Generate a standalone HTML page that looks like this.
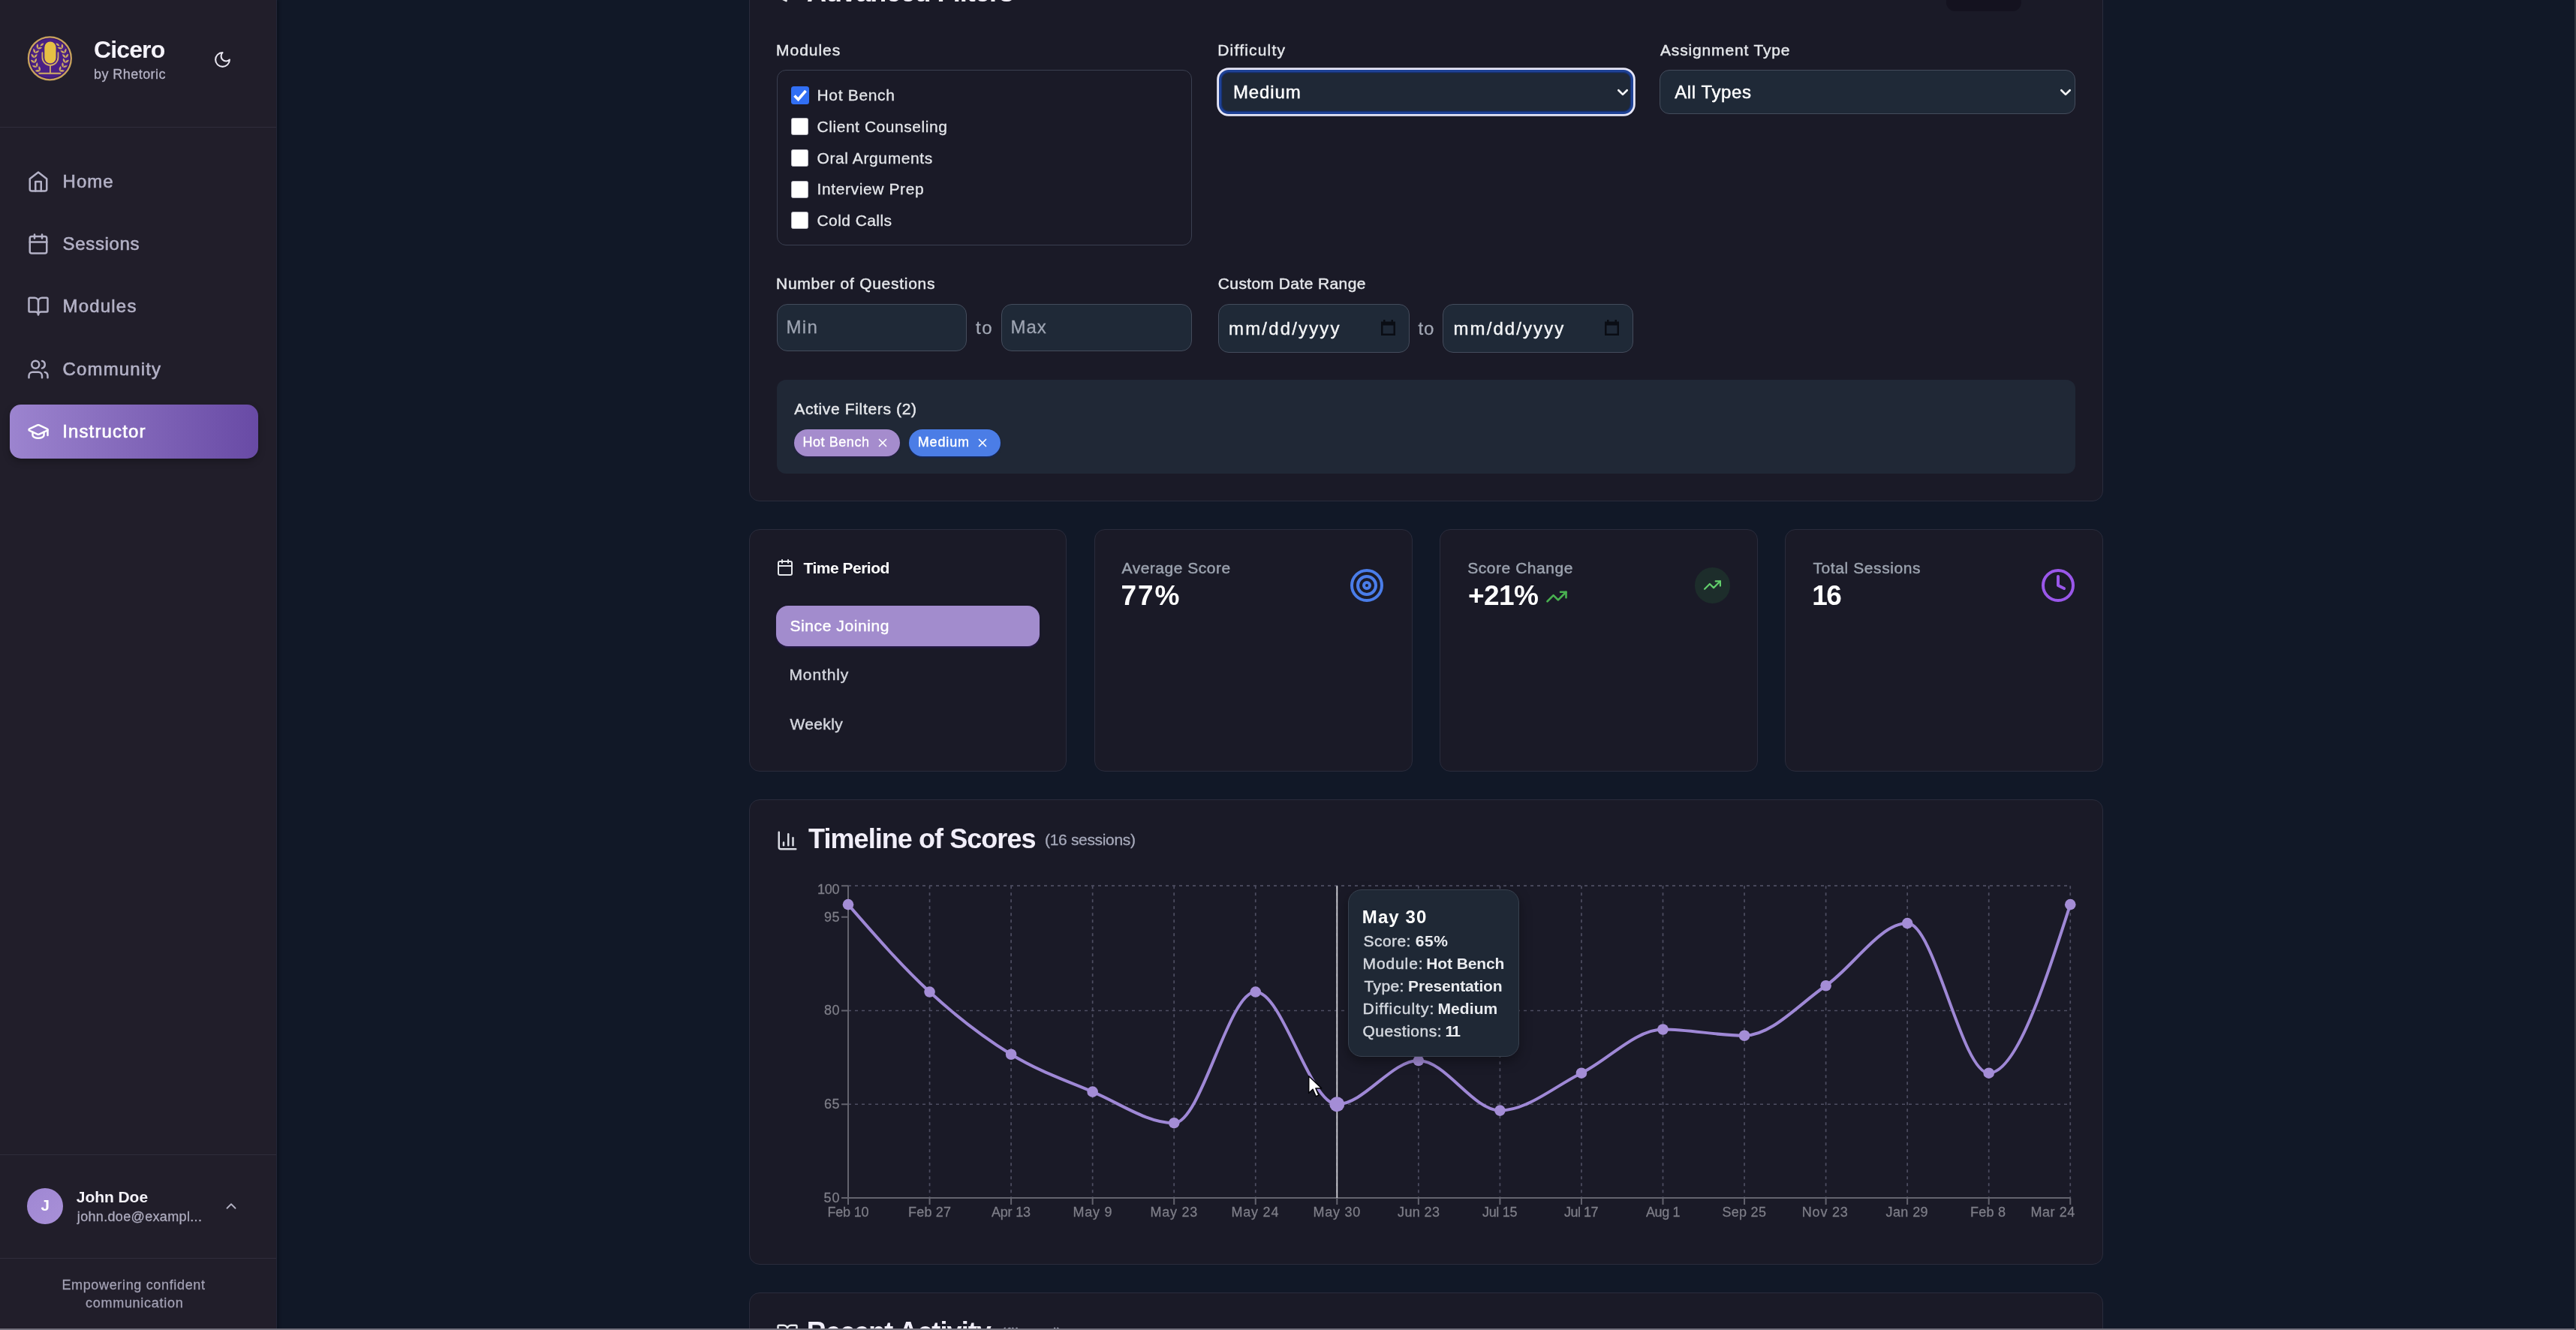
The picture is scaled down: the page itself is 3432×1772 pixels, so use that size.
<!DOCTYPE html>
<html lang="en"><head><meta charset="utf-8"><title>Cicero - Instructor</title>
<style>
html,body{margin:0;padding:0}
body{width:3432px;height:1772px;overflow:hidden;position:relative;background:#111827;font-family:"Liberation Sans", sans-serif;}
.a{position:absolute;display:block}
.t{position:absolute;white-space:pre;line-height:1;font-family:"Liberation Sans", sans-serif;font-weight:400}
.t b{font-weight:700}
.card{background:#1a1a27;border:1.5px solid #2a2c3c;box-sizing:border-box}
.inp{background:#1f2937;border:1.5px solid #444c5c;box-sizing:border-box}
</style></head>
<body>
<div class="a" style="left:0;top:0;width:369px;height:1772px;background:#211e2a;border-right:1px solid #232637;box-sizing:border-box;box-shadow:2px 0 4px rgba(4,8,16,.45)"></div>
<div class="a" style="left:0;top:168.7px;width:368px;height:1.5px;background:#2f2d3b"></div>
<div class="a" style="left:0;top:1537.7px;width:368px;height:1.5px;background:#2f2d3b"></div>
<div class="a" style="left:0;top:1675.7px;width:368px;height:1.5px;background:#2f2d3b"></div>
<svg class="a" style="left:30px;top:40px" width="80" height="75" viewBox="0 0 1419 1330"><circle cx="645" cy="670" r="505" fill="#4a2085" stroke="#c8a35b" stroke-width="40"/><circle cx="645" cy="670" r="470" fill="none" stroke="#2c1654" stroke-width="14"/><g fill="#cdab60"><path d="M416,965Q363,919 298,965Q363,1011 416,965Z"/><path d="M416,965Q448,902 387,851Q358,925 416,965Z"/><path d="M337,880Q300,820 224,844Q272,907 337,880Z"/><path d="M337,880Q386,830 345,762Q294,824 337,880Z"/><path d="M287,775Q271,706 192,705Q217,781 287,775Z"/><path d="M287,775Q350,743 332,665Q265,708 287,775Z"/><path d="M273,659Q279,589 204,564Q205,643 273,659Z"/><path d="M273,659Q343,648 349,569Q272,589 273,659Z"/><path d="M295,545Q323,480 259,433Q235,508 295,545Z"/><path d="M295,545Q365,556 396,482Q316,478 295,545Z"/><path d="M352,443Q398,390 352,325Q306,390 352,443Z"/><path d="M352,443Q415,475 466,414Q392,385 352,443Z"/><path d="M416,379Q482,383 503,311Q428,314 416,379Z"/><path d="M874,965Q927,1011 992,965Q927,919 874,965Z"/><path d="M874,965Q932,925 903,851Q842,902 874,965Z"/><path d="M953,880Q1018,907 1066,844Q990,820 953,880Z"/><path d="M953,880Q996,824 945,762Q904,830 953,880Z"/><path d="M1003,775Q1073,781 1098,705Q1019,706 1003,775Z"/><path d="M1003,775Q1025,708 958,665Q940,743 1003,775Z"/><path d="M1017,659Q1085,643 1086,564Q1011,589 1017,659Z"/><path d="M1017,659Q1018,589 941,569Q947,648 1017,659Z"/><path d="M995,545Q1055,508 1031,433Q967,480 995,545Z"/><path d="M995,545Q974,478 894,482Q925,556 995,545Z"/><path d="M938,443Q984,390 938,325Q892,390 938,443Z"/><path d="M938,443Q898,385 824,414Q875,475 938,443Z"/><path d="M874,379Q862,314 787,311Q808,383 874,379Z"/></g><g fill="none" stroke="#d2ae62" stroke-width="32" stroke-linecap="round"><path d="M468 535 v110 a187 187 0 0 0 374 0 v-110"/><path d="M655 835 V1015"/><path d="M395 1024 H895"/></g><rect x="520" y="275" width="270" height="515" rx="135" fill="#e6c044"/></svg>
<svg class="a" style="left:284px;top:67px" width="25" height="25" viewBox="0 0 24 24" fill="none" stroke="#e8e6f0" stroke-width="2" stroke-linecap="round" stroke-linejoin="round"><path d="M12 3a6 6 0 0 0 9 9 9 9 0 1 1-9-9Z"/></svg>
<div class="a" style="left:13px;top:539px;width:331px;height:72px;border-radius:15px;background:linear-gradient(90deg,#9c84cf 0%,#8368ba 48%,#684aa5 100%);box-shadow:0 4px 10px rgba(0,0,0,.25)"></div>
<svg class="a" style="left:36px;top:226.7px" width="30" height="30" viewBox="0 0 24 24" fill="none" stroke="#b3b1c6" stroke-width="2" stroke-linecap="round" stroke-linejoin="round"><path d="m3 9 9-7 9 7v11a2 2 0 0 1-2 2H5a2 2 0 0 1-2-2z"/><polyline points="9 22 9 12 15 12 15 22"/></svg>
<svg class="a" style="left:36px;top:310.0px" width="30" height="30" viewBox="0 0 24 24" fill="none" stroke="#b3b1c6" stroke-width="2" stroke-linecap="round" stroke-linejoin="round"><rect width="18" height="18" x="3" y="4" rx="2" ry="2"/><line x1="16" x2="16" y1="2" y2="6"/><line x1="8" x2="8" y1="2" y2="6"/><line x1="3" x2="21" y1="10" y2="10"/></svg>
<svg class="a" style="left:36px;top:393.3px" width="30" height="30" viewBox="0 0 24 24" fill="none" stroke="#b3b1c6" stroke-width="2" stroke-linecap="round" stroke-linejoin="round"><path d="M12 7v14"/><path d="M3 18a1 1 0 0 1-1-1V4a1 1 0 0 1 1-1h5a4 4 0 0 1 4 4 4 4 0 0 1 4-4h5a1 1 0 0 1 1 1v13a1 1 0 0 1-1 1h-6a3 3 0 0 0-3 3 3 3 0 0 0-3-3z"/></svg>
<svg class="a" style="left:36px;top:476.6px" width="30" height="30" viewBox="0 0 24 24" fill="none" stroke="#b3b1c6" stroke-width="2" stroke-linecap="round" stroke-linejoin="round"><path d="M16 21v-2a4 4 0 0 0-4-4H6a4 4 0 0 0-4 4v2"/><circle cx="9" cy="7" r="4"/><path d="M22 21v-2a4 4 0 0 0-3-3.87"/><path d="M16 3.13a4 4 0 0 1 0 7.75"/></svg>
<svg class="a" style="left:36px;top:559.9px" width="30" height="30" viewBox="0 0 24 24" fill="none" stroke="#ffffff" stroke-width="2" stroke-linecap="round" stroke-linejoin="round"><path d="M21.42 10.922a1 1 0 0 0-.019-1.838L12.83 5.18a2 2 0 0 0-1.66 0L2.6 9.08a1 1 0 0 0 0 1.832l8.57 3.908a2 2 0 0 0 1.66 0z"/><path d="M22 10v6"/><path d="M6 12.5V16a6 3 0 0 0 12 0v-3.5"/></svg>
<div class="a" style="left:36px;top:1583px;width:48px;height:48px;border-radius:50%;background:linear-gradient(135deg,#9f87d3,#a890d7)"></div>
<svg class="a" style="left:297px;top:1596px" width="22" height="22" viewBox="0 0 24 24" fill="none" stroke="#b3b1c2" stroke-width="2" stroke-linecap="round" stroke-linejoin="round"><path d="m18 15-6-6-6 6"/></svg>
<div class="a card" style="left:998px;top:-40px;width:1804px;height:707.5px;border-radius:14px"></div>
<div class="a card" style="left:998px;top:704.5px;width:422.5px;height:323.5px;border-radius:14px"></div>
<div class="a card" style="left:1457.5px;top:704.5px;width:424.0px;height:323.5px;border-radius:14px"></div>
<div class="a card" style="left:1917.75px;top:704.5px;width:424.0px;height:323.5px;border-radius:14px"></div>
<div class="a card" style="left:2378px;top:704.5px;width:424px;height:323.5px;border-radius:14px"></div>
<div class="a card" style="left:998px;top:1064.5px;width:1804px;height:620.5px;border-radius:14px"></div>
<div class="a card" style="left:998px;top:1722px;width:1804px;height:178px;border-radius:14px"></div>
<svg class="a" style="left:1029.5px;top:-25.4px" width="30" height="30" viewBox="0 0 24 24" fill="none" stroke="#e5e7eb" stroke-width="2" stroke-linecap="round" stroke-linejoin="round"><polygon points="22 3 2 3 10 12.46 10 19 14 21 14 12.46 22 3"/></svg>
<div class="a" style="left:2592.5px;top:-30px;width:100px;height:44.5px;border-radius:12px;background:#14121f"></div>
<div class="a" style="left:1034.5px;top:93px;width:553.5px;height:234px;border-radius:12px;border:1px solid #3a3f50;box-sizing:border-box"></div>
<div class="a" style="left:1054px;top:115px;width:24.4px;height:24.4px;border-radius:3.5px;background:#316ff4"></div>
<svg class="a" style="left:1054px;top:115px" width="24" height="24" viewBox="0 0 24 24" fill="none" stroke="#fff" stroke-width="3.6" stroke-linecap="butt" stroke-linejoin="miter"><path d="M4.5 12.5l5 5L19.5 6"/></svg>
<div class="a" style="left:1054px;top:157.1px;width:23px;height:23px;border-radius:2.5px;background:#fff;border:1px solid #b9b9c2;box-sizing:border-box"></div>
<div class="a" style="left:1054px;top:198.8px;width:23px;height:23px;border-radius:2.5px;background:#fff;border:1px solid #b9b9c2;box-sizing:border-box"></div>
<div class="a" style="left:1054px;top:240.5px;width:23px;height:23px;border-radius:2.5px;background:#fff;border:1px solid #b9b9c2;box-sizing:border-box"></div>
<div class="a" style="left:1054px;top:282.1px;width:23px;height:23px;border-radius:2.5px;background:#fff;border:1px solid #b9b9c2;box-sizing:border-box"></div>
<div class="a" style="left:1623.6px;top:92.6px;width:552.6px;height:59.6px;border-radius:13px;background:#1f2836;border:3.3px solid #1f4296;box-sizing:border-box;box-shadow:0 0 0 2.8px #e6e6f7, inset 0 0 0 1.2px #16306f"></div>
<div class="a inp" style="left:2211px;top:93px;width:554px;height:59px;border-radius:13px"></div>
<svg class="a" style="left:2153.9px;top:117.6px" width="16" height="11" viewBox="0 0 16 11" fill="none" stroke="#f3f4f6" stroke-width="2.7" stroke-linecap="round" stroke-linejoin="round"><path d="M2.3 2.2 8 7.9 13.7 2.2"/></svg>
<svg class="a" style="left:2743.6px;top:117.6px" width="16" height="11" viewBox="0 0 16 11" fill="none" stroke="#f3f4f6" stroke-width="2.7" stroke-linecap="round" stroke-linejoin="round"><path d="M2.3 2.2 8 7.9 13.7 2.2"/></svg>
<div class="a inp" style="left:1034.5px;top:405px;width:253.5px;height:62.5px;border-radius:14px"></div>
<div class="a inp" style="left:1334px;top:405px;width:254px;height:62.5px;border-radius:14px"></div>
<div class="a inp" style="left:1623.25px;top:405px;width:254.25px;height:65px;border-radius:14px"></div>
<div class="a inp" style="left:1922px;top:405px;width:254px;height:65px;border-radius:14px"></div>
<svg class="a" style="left:1840px;top:426px" width="19" height="21" viewBox="0 0 19 21"><path d="M3 0h2.5v2.5h8V0H16v2.5h3V21H0V2.5h3z M2.5 7.5v11h14v-11z" fill="#0a0d14" fill-rule="evenodd"/></svg>
<svg class="a" style="left:2138px;top:426px" width="19" height="21" viewBox="0 0 19 21"><path d="M3 0h2.5v2.5h8V0H16v2.5h3V21H0V2.5h3z M2.5 7.5v11h14v-11z" fill="#0a0d14" fill-rule="evenodd"/></svg>
<div class="a" style="left:1034.5px;top:506px;width:1730.5px;height:125px;border-radius:12px;background:#202836"></div>
<div class="a" style="left:1057.5px;top:571.5px;width:141.75px;height:36px;border-radius:18px;background:#a58ccd;box-shadow:0 1.5px 2px rgba(45,25,90,.55)"></div>
<div class="a" style="left:1210.75px;top:571.5px;width:121.75px;height:36px;border-radius:18px;background:#4b7de6;box-shadow:0 1.5px 2px rgba(10,40,130,.6)"></div>
<svg class="a" style="left:1166.6px;top:580.5px" width="18" height="18" viewBox="0 0 24 24" fill="none" stroke="#ffffff" stroke-width="2.2" stroke-linecap="round" stroke-linejoin="round"><path d="M18 6 6 18"/><path d="m6 6 12 12"/></svg>
<svg class="a" style="left:1300.1px;top:580.5px" width="18" height="18" viewBox="0 0 24 24" fill="none" stroke="#ffffff" stroke-width="2.2" stroke-linecap="round" stroke-linejoin="round"><path d="M18 6 6 18"/><path d="m6 6 12 12"/></svg>
<svg class="a" style="left:1033.5px;top:744px" width="24" height="24" viewBox="0 0 24 24" fill="none" stroke="#e5e7eb" stroke-width="2" stroke-linecap="round" stroke-linejoin="round"><rect width="18" height="18" x="3" y="4" rx="2" ry="2"/><line x1="16" x2="16" y1="2" y2="6"/><line x1="8" x2="8" y1="2" y2="6"/><line x1="3" x2="21" y1="10" y2="10"/></svg>
<div class="a" style="left:1034.25px;top:806.75px;width:350.75px;height:53.75px;border-radius:16px;background:#a28ccd;box-shadow:0 1.5px 2.5px rgba(45,25,90,.65)"></div>
<svg class="a" style="left:1797px;top:756px" width="48" height="48" viewBox="0 0 24 24" fill="none" stroke="#4a7de9" stroke-width="2" stroke-linecap="round" stroke-linejoin="round"><circle cx="12" cy="12" r="10"/><circle cx="12" cy="12" r="6"/><circle cx="12" cy="12" r="2"/></svg>
<svg class="a" style="left:2059px;top:779.5px" width="30" height="30" viewBox="0 0 24 24" fill="none" stroke="#49b050" stroke-width="2.1" stroke-linecap="round" stroke-linejoin="round"><polyline points="22 7 13.5 15.5 8.5 10.5 2 17"/><polyline points="16 7 22 7 22 13"/></svg>
<div class="a" style="left:2257.5px;top:756px;width:47.5px;height:47.5px;border-radius:50%;background:#1d2d2b"></div>
<svg class="a" style="left:2268.5px;top:767.2px" width="25" height="25" viewBox="0 0 24 24" fill="none" stroke="#62cf6c" stroke-width="2.1" stroke-linecap="round" stroke-linejoin="round"><polyline points="22 7 13.5 15.5 8.5 10.5 2 17"/><polyline points="16 7 22 7 22 13"/></svg>
<svg class="a" style="left:2717.5px;top:756px" width="48" height="48" viewBox="0 0 24 24" fill="none" stroke="#9a57ea" stroke-width="2" stroke-linecap="round" stroke-linejoin="round"><circle cx="12" cy="12" r="10"/><polyline points="12 6 12 12 16 14"/></svg>
<svg class="a" style="left:1033.75px;top:1104.5px" width="30" height="30" viewBox="0 0 24 24" fill="none" stroke="#d9dbe3" stroke-width="2" stroke-linecap="round" stroke-linejoin="round"><path d="M3 3v16a2 2 0 0 0 2 2h16"/><path d="M18 17V9"/><path d="M13 17V5"/><path d="M8 17v-3"/></svg>
<svg class="a" style="left:0;top:0" width="3432" height="1772" viewBox="0 0 3432 1772"><g stroke="#4e4e62" stroke-width="1.7" stroke-dasharray="4 5" fill="none"><path d="M1130.0,1180.20H2758.25"/><path d="M1130.0,1346.52H2758.25"/><path d="M1130.0,1471.26H2758.25"/><path d="M1238.55,1180.2V1596.0"/><path d="M1347.10,1180.2V1596.0"/><path d="M1455.65,1180.2V1596.0"/><path d="M1564.20,1180.2V1596.0"/><path d="M1672.75,1180.2V1596.0"/><path d="M1781.30,1180.2V1596.0"/><path d="M1889.85,1180.2V1596.0"/><path d="M1998.40,1180.2V1596.0"/><path d="M2106.95,1180.2V1596.0"/><path d="M2215.50,1180.2V1596.0"/><path d="M2324.05,1180.2V1596.0"/><path d="M2432.60,1180.2V1596.0"/><path d="M2541.15,1180.2V1596.0"/><path d="M2649.70,1180.2V1596.0"/><path d="M2758.25,1180.2V1596.0"/></g><g stroke="#63636e" stroke-width="2" fill="none"><path d="M1130.0,1180.2V1596.0"/><path d="M1130.0,1596.0H2758.25"/><path d="M1130.00,1596.0v9"/><path d="M1238.55,1596.0v9"/><path d="M1347.10,1596.0v9"/><path d="M1455.65,1596.0v9"/><path d="M1564.20,1596.0v9"/><path d="M1672.75,1596.0v9"/><path d="M1781.30,1596.0v9"/><path d="M1889.85,1596.0v9"/><path d="M1998.40,1596.0v9"/><path d="M2106.95,1596.0v9"/><path d="M2215.50,1596.0v9"/><path d="M2324.05,1596.0v9"/><path d="M2432.60,1596.0v9"/><path d="M2541.15,1596.0v9"/><path d="M2649.70,1596.0v9"/><path d="M2758.25,1596.0v9"/><path d="M1121.0,1180.20h9"/><path d="M1121.0,1221.78h9"/><path d="M1121.0,1346.52h9"/><path d="M1121.0,1471.26h9"/><path d="M1121.0,1596.00h9"/></g><path d="M1781.30,1180.2V1596.0" stroke="#d2d2d8" stroke-width="1.8"/><path d="M1130.00,1205.15C1166.18,1246.73,1202.37,1288.31,1238.55,1321.57C1274.73,1354.84,1310.92,1382.56,1347.10,1404.73C1383.28,1426.91,1419.47,1439.38,1455.65,1454.63C1491.83,1469.87,1528.02,1496.21,1564.20,1496.21C1600.38,1496.21,1636.57,1321.57,1672.75,1321.57C1708.93,1321.57,1745.12,1471.26,1781.30,1471.26C1817.48,1471.26,1853.67,1413.05,1889.85,1413.05C1926.03,1413.05,1962.22,1479.58,1998.40,1479.58C2034.58,1479.58,2070.77,1447.70,2106.95,1429.68C2143.13,1411.66,2179.32,1371.47,2215.50,1371.47C2251.68,1371.47,2287.87,1379.78,2324.05,1379.78C2360.23,1379.78,2396.42,1338.20,2432.60,1313.26C2468.78,1288.31,2504.97,1230.10,2541.15,1230.10C2577.33,1230.10,2613.52,1429.68,2649.70,1429.68C2685.88,1429.68,2722.07,1317.41,2758.25,1205.15" fill="none" stroke="#9f88d6" stroke-width="4" stroke-linecap="round"/><circle cx="1130.00" cy="1205.15" r="7.3" fill="#a48dd6"/><circle cx="1238.55" cy="1321.57" r="7.3" fill="#a48dd6"/><circle cx="1347.10" cy="1404.73" r="7.3" fill="#a48dd6"/><circle cx="1455.65" cy="1454.63" r="7.3" fill="#a48dd6"/><circle cx="1564.20" cy="1496.21" r="7.3" fill="#a48dd6"/><circle cx="1672.75" cy="1321.57" r="7.3" fill="#a48dd6"/><circle cx="1781.30" cy="1471.26" r="10" fill="#a48dd6"/><circle cx="1889.85" cy="1413.05" r="7.3" fill="#a48dd6"/><circle cx="1998.40" cy="1479.58" r="7.3" fill="#a48dd6"/><circle cx="2106.95" cy="1429.68" r="7.3" fill="#a48dd6"/><circle cx="2215.50" cy="1371.47" r="7.3" fill="#a48dd6"/><circle cx="2324.05" cy="1379.78" r="7.3" fill="#a48dd6"/><circle cx="2432.60" cy="1313.26" r="7.3" fill="#a48dd6"/><circle cx="2541.15" cy="1230.10" r="7.3" fill="#a48dd6"/><circle cx="2649.70" cy="1429.68" r="7.3" fill="#a48dd6"/><circle cx="2758.25" cy="1205.15" r="7.3" fill="#a48dd6"/></svg>
<div class="a" style="left:1796px;top:1184.5px;width:227.5px;height:223.8px;border-radius:18px;background:#1f2835;border:1.5px solid #38414f;box-sizing:border-box;box-shadow:0 6px 16px rgba(0,0,0,.35)"></div>
<svg class="a" style="left:1033.75px;top:1762px" width="30" height="30" viewBox="0 0 24 24" fill="none" stroke="#e5e7eb" stroke-width="2" stroke-linecap="round" stroke-linejoin="round"><path d="M12 7v14"/><path d="M3 18a1 1 0 0 1-1-1V4a1 1 0 0 1 1-1h5a4 4 0 0 1 4 4 4 4 0 0 1 4-4h5a1 1 0 0 1 1 1v13a1 1 0 0 1-1 1h-6a3 3 0 0 0-3 3 3 3 0 0 0-3-3z"/></svg>
<div class="a" style="left:0;top:0;width:100%;height:100%;will-change:transform"><span class="t" style="left:125.00px;top:50.11px;font-size:32px;color:#f5f3fa;letter-spacing:-0.869px;font-weight:700;">Cicero</span>
<span class="t" style="left:125.00px;top:90.26px;font-size:18px;color:#b5b3c6;letter-spacing:0.445px;-webkit-text-stroke:0.28px #b5b3c6;">by Rhetoric</span>
<span class="t" style="left:83.60px;top:229.78px;font-size:24px;color:#b3b1c6;letter-spacing:1.005px;-webkit-text-stroke:0.6px #b3b1c6;">Home</span>
<span class="t" style="left:83.60px;top:313.08px;font-size:24px;color:#b3b1c6;letter-spacing:0.658px;-webkit-text-stroke:0.6px #b3b1c6;">Sessions</span>
<span class="t" style="left:83.60px;top:396.38px;font-size:24px;color:#b3b1c6;letter-spacing:1.180px;-webkit-text-stroke:0.6px #b3b1c6;">Modules</span>
<span class="t" style="left:83.60px;top:479.68px;font-size:24px;color:#b3b1c6;letter-spacing:1.130px;-webkit-text-stroke:0.6px #b3b1c6;">Community</span>
<span class="t" style="left:83.20px;top:562.98px;font-size:24px;color:#ffffff;letter-spacing:1.140px;-webkit-text-stroke:0.65px #ffffff;">Instructor</span>
<span class="t" style="left:54.50px;top:1595.85px;font-size:20.5px;color:#ffffff;letter-spacing:0.000px;font-weight:700;">J</span>
<span class="t" style="left:101.80px;top:1584.22px;font-size:21px;color:#f5f3fa;letter-spacing:-0.056px;font-weight:700;">John Doe</span>
<span class="t" style="left:102.80px;top:1611.96px;font-size:18px;color:#aeacbf;letter-spacing:0.337px;-webkit-text-stroke:0.28px #aeacbf;">john.doe@exampl...</span>
<span class="t" style="left:82.40px;top:1702.76px;font-size:18px;color:#a3a1b4;letter-spacing:0.657px;-webkit-text-stroke:0.28px #a3a1b4;">Empowering confident</span>
<span class="t" style="left:114.00px;top:1726.56px;font-size:18px;color:#a3a1b4;letter-spacing:0.721px;-webkit-text-stroke:0.28px #a3a1b4;">communication</span>
<span class="t" style="left:1075.00px;top:-28.17px;font-size:36px;color:#f3f0fa;letter-spacing:-0.938px;font-weight:700;">Advanced Filters</span>
<span class="t" style="left:1034.00px;top:55.57px;font-size:21px;color:#e5e7eb;letter-spacing:0.977px;-webkit-text-stroke:0.45px #e5e7eb;">Modules</span>
<span class="t" style="left:1622.25px;top:55.57px;font-size:21px;color:#e5e7eb;letter-spacing:1.198px;-webkit-text-stroke:0.45px #e5e7eb;">Difficulty</span>
<span class="t" style="left:2212.00px;top:55.57px;font-size:21px;color:#e5e7eb;letter-spacing:0.838px;-webkit-text-stroke:0.45px #e5e7eb;">Assignment Type</span>
<span class="t" style="left:1088.50px;top:116.32px;font-size:21px;color:#e5e7eb;letter-spacing:0.671px;-webkit-text-stroke:0.28px #e5e7eb;">Hot Bench</span>
<span class="t" style="left:1088.50px;top:158.02px;font-size:21px;color:#e5e7eb;letter-spacing:0.551px;-webkit-text-stroke:0.28px #e5e7eb;">Client Counseling</span>
<span class="t" style="left:1088.50px;top:199.62px;font-size:21px;color:#e5e7eb;letter-spacing:0.603px;-webkit-text-stroke:0.28px #e5e7eb;">Oral Arguments</span>
<span class="t" style="left:1088.50px;top:241.32px;font-size:21px;color:#e5e7eb;letter-spacing:0.611px;-webkit-text-stroke:0.28px #e5e7eb;">Interview Prep</span>
<span class="t" style="left:1088.50px;top:283.02px;font-size:21px;color:#e5e7eb;letter-spacing:0.422px;-webkit-text-stroke:0.28px #e5e7eb;">Cold Calls</span>
<span class="t" style="left:1642.90px;top:110.68px;font-size:24px;color:#ffffff;letter-spacing:0.887px;-webkit-text-stroke:0.45px #ffffff;">Medium</span>
<span class="t" style="left:2231.25px;top:110.68px;font-size:24px;color:#ffffff;letter-spacing:0.602px;-webkit-text-stroke:0.45px #ffffff;">All Types</span>
<span class="t" style="left:1034.00px;top:367.07px;font-size:21px;color:#e5e7eb;letter-spacing:0.726px;-webkit-text-stroke:0.45px #e5e7eb;">Number of Questions</span>
<span class="t" style="left:1622.75px;top:367.07px;font-size:21px;color:#e5e7eb;letter-spacing:0.401px;-webkit-text-stroke:0.45px #e5e7eb;">Custom Date Range</span>
<span class="t" style="left:1047.60px;top:424.48px;font-size:24px;color:#9da4b2;letter-spacing:1.288px;-webkit-text-stroke:0.28px #9da4b2;">Min</span>
<span class="t" style="left:1300.00px;top:424.78px;font-size:24px;color:#a3a8b5;letter-spacing:1.582px;-webkit-text-stroke:0.28px #a3a8b5;">to</span>
<span class="t" style="left:1346.50px;top:424.48px;font-size:24px;color:#9da4b2;letter-spacing:0.953px;-webkit-text-stroke:0.28px #9da4b2;">Max</span>
<span class="t" style="left:1637.00px;top:425.78px;font-size:24px;color:#f3f4f6;letter-spacing:2.165px;-webkit-text-stroke:0.4px #f3f4f6;">mm/dd/yyyy</span>
<span class="t" style="left:1889.50px;top:425.88px;font-size:24px;color:#a3a8b5;letter-spacing:0.832px;-webkit-text-stroke:0.28px #a3a8b5;">to</span>
<span class="t" style="left:1936.50px;top:425.78px;font-size:24px;color:#f3f4f6;letter-spacing:2.082px;-webkit-text-stroke:0.4px #f3f4f6;">mm/dd/yyyy</span>
<span class="t" style="left:1058.25px;top:534.32px;font-size:21px;color:#e5e7eb;letter-spacing:0.650px;-webkit-text-stroke:0.45px #e5e7eb;">Active Filters (2)</span>
<span class="t" style="left:1069.50px;top:579.61px;font-size:18px;color:#ffffff;letter-spacing:0.556px;-webkit-text-stroke:0.4px #ffffff;">Hot Bench</span>
<span class="t" style="left:1222.75px;top:579.61px;font-size:18px;color:#ffffff;letter-spacing:0.843px;-webkit-text-stroke:0.4px #ffffff;">Medium</span>
<span class="t" style="left:1070.50px;top:745.57px;font-size:21px;color:#ffffff;letter-spacing:-0.500px;font-weight:700;">Time Period</span>
<span class="t" style="left:1052.50px;top:823.07px;font-size:21px;color:#ffffff;letter-spacing:0.584px;-webkit-text-stroke:0.45px #ffffff;">Since Joining</span>
<span class="t" style="left:1051.50px;top:888.32px;font-size:21px;color:#d4d6de;letter-spacing:0.870px;-webkit-text-stroke:0.45px #d4d6de;">Monthly</span>
<span class="t" style="left:1052.50px;top:953.82px;font-size:21px;color:#d4d6de;letter-spacing:0.356px;-webkit-text-stroke:0.45px #d4d6de;">Weekly</span>
<span class="t" style="left:1494.50px;top:745.57px;font-size:21px;color:#9ca3af;letter-spacing:0.512px;-webkit-text-stroke:0.45px #9ca3af;">Average Score</span>
<span class="t" style="left:1493.50px;top:775.03px;font-size:37px;color:#ffffff;letter-spacing:1.918px;font-weight:700;">77%</span>
<span class="t" style="left:1955.25px;top:745.57px;font-size:21px;color:#9ca3af;letter-spacing:0.538px;-webkit-text-stroke:0.45px #9ca3af;">Score Change</span>
<span class="t" style="left:1956.00px;top:775.03px;font-size:37px;color:#ffffff;letter-spacing:-0.591px;font-weight:700;">+21%</span>
<span class="t" style="left:2415.50px;top:745.57px;font-size:21px;color:#9ca3af;letter-spacing:0.584px;-webkit-text-stroke:0.45px #9ca3af;">Total Sessions</span>
<span class="t" style="left:2414.25px;top:775.03px;font-size:37px;color:#ffffff;letter-spacing:-1.600px;font-weight:700;">16</span>
<span class="t" style="left:1077.00px;top:1099.63px;font-size:36px;color:#f1eef9;letter-spacing:-0.937px;font-weight:700;">Timeline of Scores</span>
<span class="t" style="left:1392.00px;top:1108.07px;font-size:21px;color:#a6a9ba;letter-spacing:-0.325px;-webkit-text-stroke:0.3px #a6a9ba;">(16 sessions)</span>
<span class="t" style="left:1089.00px;top:1175.76px;font-size:18px;color:#7e7e88;letter-spacing:-0.318px;-webkit-text-stroke:0.28px #7e7e88;">100</span>
<span class="t" style="left:1098.00px;top:1212.54px;font-size:18px;color:#7e7e88;letter-spacing:0.379px;-webkit-text-stroke:0.28px #7e7e88;">95</span>
<span class="t" style="left:1098.00px;top:1337.28px;font-size:18px;color:#7e7e88;letter-spacing:0.379px;-webkit-text-stroke:0.28px #7e7e88;">80</span>
<span class="t" style="left:1098.00px;top:1462.02px;font-size:18px;color:#7e7e88;letter-spacing:0.379px;-webkit-text-stroke:0.28px #7e7e88;">65</span>
<span class="t" style="left:1097.40px;top:1586.76px;font-size:18px;color:#7e7e88;letter-spacing:0.979px;-webkit-text-stroke:0.28px #7e7e88;">50</span>
<span class="t" style="left:1102.40px;top:1606.11px;font-size:18px;color:#7e7e88;letter-spacing:-0.187px;-webkit-text-stroke:0.28px #7e7e88;">Feb 10</span>
<span class="t" style="left:1210.00px;top:1606.11px;font-size:18px;color:#7e7e88;letter-spacing:0.193px;-webkit-text-stroke:0.28px #7e7e88;">Feb 27</span>
<span class="t" style="left:1321.00px;top:1606.11px;font-size:18px;color:#7e7e88;letter-spacing:-0.207px;-webkit-text-stroke:0.28px #7e7e88;">Apr 13</span>
<span class="t" style="left:1429.60px;top:1606.11px;font-size:18px;color:#7e7e88;letter-spacing:0.695px;-webkit-text-stroke:0.28px #7e7e88;">May 9</span>
<span class="t" style="left:1532.40px;top:1606.11px;font-size:18px;color:#7e7e88;letter-spacing:0.756px;-webkit-text-stroke:0.28px #7e7e88;">May 23</span>
<span class="t" style="left:1640.60px;top:1606.11px;font-size:18px;color:#7e7e88;letter-spacing:0.756px;-webkit-text-stroke:0.28px #7e7e88;">May 24</span>
<span class="t" style="left:1749.50px;top:1606.11px;font-size:18px;color:#7e7e88;letter-spacing:0.736px;-webkit-text-stroke:0.28px #7e7e88;">May 30</span>
<span class="t" style="left:1862.00px;top:1606.11px;font-size:18px;color:#7e7e88;letter-spacing:0.393px;-webkit-text-stroke:0.28px #7e7e88;">Jun 23</span>
<span class="t" style="left:1975.00px;top:1606.11px;font-size:18px;color:#7e7e88;letter-spacing:-0.327px;-webkit-text-stroke:0.28px #7e7e88;">Jul 15</span>
<span class="t" style="left:2084.00px;top:1606.11px;font-size:18px;color:#7e7e88;letter-spacing:-0.487px;-webkit-text-stroke:0.28px #7e7e88;">Jul 17</span>
<span class="t" style="left:2192.90px;top:1606.11px;font-size:18px;color:#7e7e88;letter-spacing:-0.334px;-webkit-text-stroke:0.28px #7e7e88;">Aug 1</span>
<span class="t" style="left:2294.60px;top:1606.11px;font-size:18px;color:#7e7e88;letter-spacing:0.250px;-webkit-text-stroke:0.28px #7e7e88;">Sep 25</span>
<span class="t" style="left:2400.80px;top:1606.11px;font-size:18px;color:#7e7e88;letter-spacing:0.793px;-webkit-text-stroke:0.28px #7e7e88;">Nov 23</span>
<span class="t" style="left:2512.50px;top:1606.11px;font-size:18px;color:#7e7e88;letter-spacing:0.413px;-webkit-text-stroke:0.28px #7e7e88;">Jan 29</span>
<span class="t" style="left:2625.00px;top:1606.11px;font-size:18px;color:#7e7e88;letter-spacing:0.245px;-webkit-text-stroke:0.28px #7e7e88;">Feb 8</span>
<span class="t" style="left:2705.40px;top:1606.11px;font-size:18px;color:#7e7e88;letter-spacing:0.576px;-webkit-text-stroke:0.28px #7e7e88;">Mar 24</span>
<span class="t" style="left:1814.80px;top:1209.58px;font-size:24px;color:#ffffff;letter-spacing:1.097px;font-weight:700;">May 30</span>
<span class="t" style="left:1816.50px;top:1243.12px;font-size:21px;color:#d3d7de;letter-spacing:0.446px;-webkit-text-stroke:0.5px #d3d7de;">Score:</span>
<span class="t" style="left:1885.70px;top:1243.12px;font-size:21px;color:#e9ebef;letter-spacing:0.571px;font-weight:700;">65%</span>
<span class="t" style="left:1815.50px;top:1272.92px;font-size:21px;color:#d3d7de;letter-spacing:0.886px;-webkit-text-stroke:0.5px #d3d7de;">Module:</span>
<span class="t" style="left:1900.30px;top:1272.92px;font-size:21px;color:#e9ebef;letter-spacing:-0.109px;font-weight:700;">Hot Bench</span>
<span class="t" style="left:1817.50px;top:1302.72px;font-size:21px;color:#d3d7de;letter-spacing:0.390px;-webkit-text-stroke:0.5px #d3d7de;">Type:</span>
<span class="t" style="left:1876.10px;top:1302.72px;font-size:21px;color:#e9ebef;letter-spacing:-0.152px;font-weight:700;">Presentation</span>
<span class="t" style="left:1815.50px;top:1332.92px;font-size:21px;color:#d3d7de;letter-spacing:0.992px;-webkit-text-stroke:0.5px #d3d7de;">Difficulty:</span>
<span class="t" style="left:1915.50px;top:1332.92px;font-size:21px;color:#e9ebef;letter-spacing:0.086px;font-weight:700;">Medium</span>
<span class="t" style="left:1815.50px;top:1362.72px;font-size:21px;color:#d3d7de;letter-spacing:0.527px;-webkit-text-stroke:0.5px #d3d7de;">Questions:</span>
<span class="t" style="left:1925.40px;top:1362.72px;font-size:21px;color:#e9ebef;letter-spacing:-1.600px;font-weight:700;">11</span>
<span class="t" style="left:1074.80px;top:1757.33px;font-size:36px;color:#f1eef9;letter-spacing:-0.909px;font-weight:700;">Recent Activity</span>
<span class="t" style="left:1333.00px;top:1765.82px;font-size:21px;color:#a6a9ba;letter-spacing:0.551px;-webkit-text-stroke:0.28px #a6a9ba;">(filtered)</span></div>
<svg class="a" style="left:1741.3px;top:1431px" width="26" height="34" viewBox="0 0 26 34"><path d="M2.7 2.7 V25.4 L8.1 20.3 L12.2 29.8 L15.9 28.2 L11.9 18.9 H19.6 Z" fill="#fff" stroke="#05050a" stroke-width="1.5" stroke-linejoin="round"/></svg>
<div class="a" style="left:0;top:1770px;width:3432px;height:2px;background:#74727e"></div>
<div class="a" style="left:3430px;top:0;width:1.8px;height:1772px;background:#31353f"></div>
</body></html>
